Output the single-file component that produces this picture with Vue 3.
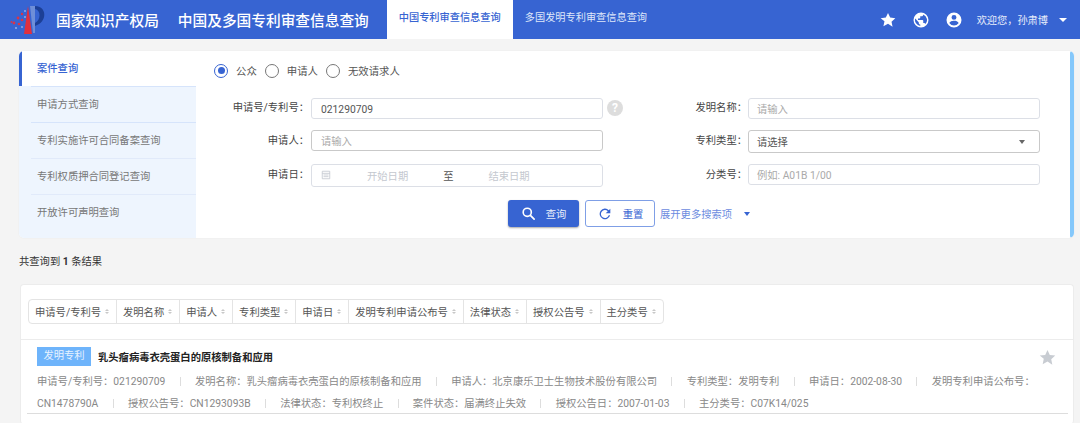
<script setup>
const sideItems = ['案件查询', '申请方式查询', '专利实施许可合同备案查询', '专利权质押合同登记查询', '开放许可声明查询']
const sortItems = ['申请号/专利号', '发明名称', '申请人', '专利类型', '申请日', '发明专利申请公布号', '法律状态', '授权公告号', '主分类号']
const meta = [
  ['申请号/专利号：', '021290709'],
  ['发明名称：', '乳头瘤病毒衣壳蛋白的原核制备和应用'],
  ['申请人：', '北京康乐卫士生物技术股份有限公司'],
  ['专利类型：', '发明专利'],
  ['申请日：', '2002-08-30'],
  ['发明专利申请公布号：', 'CN1478790A'],
  ['授权公告号：', 'CN1293093B'],
  ['法律状态：', '专利权终止'],
  ['案件状态：', '届满终止失效'],
  ['授权公告日：', '2007-01-03'],
  ['主分类号：', 'C07K14/025']
]
</script>

<template>
  <div class="page">
    <header class="top">
      <svg class="logo" viewBox="0 0 40 34" width="40" height="34">
        <path d="M19 3 L23 31 L15 31 Z" fill="#e0303f" />
        <path d="M21 3 L26 3 L26 30 L24 30 Z" fill="#6f8fd8" />
        <path d="M26 3 C38 3 39 19 26 23 L26 20 C32 17 32 7 26 6 Z" fill="#1c3f96" />
        <g fill="#d8344a">
          <circle cx="13" cy="11" r="1.2" /><circle cx="9" cy="15" r="1.4" /><circle cx="13" cy="17" r="1.3" />
          <circle cx="5" cy="20" r="1.4" /><circle cx="10" cy="21" r="1.3" /><circle cx="2.500" cy="19" r="1" />
        </g>
        <g fill="#8fa8e6">
          <circle cx="16" cy="8" r="1" /><circle cx="16" cy="14" r="1" /><circle cx="7" cy="25" r="1.1" /><circle cx="13" cy="24" r="1" />
        </g>
      </svg>
      <span class="org">国家知识产权局</span>
      <span class="sys">中国及多国专利审查信息查询</span>
      <a class="tab active">中国专利审查信息查询</a>
      <a class="tab">多国发明专利审查信息查询</a>
      <div class="top-right">
        <svg viewBox="0 0 24 24" width="18" height="18"><path fill="#fff" d="M12 2.500l2.900 6.300 6.900.8-5.100 4.700 1.400 6.800L12 16.900l-6.100 3.500 1.400-6.800L2.200 9.600l6.900-.8z" /></svg>
        <svg class="ic-globe" viewBox="0 0 24 24" width="18" height="18"><path fill="#fff" d="M12 2a10 10 0 100 20 10 10 0 000-20zm-1 17.900A8 8 0 014.200 10L9 15v1c0 1.100.9 2 2 2v1.900zm6.900-2.500c-.3-.8-1-1.400-1.900-1.400h-1v-3c0-.6-.4-1-1-1H8v-2h2c.6 0 1-.4 1-1V7h2c1.100 0 2-.9 2-2v-.4a8 8 0 012.900 12.800z" /></svg>
        <svg class="ic-user" viewBox="0 0 24 24" width="18" height="18"><path fill="#fff" d="M12 2a10 10 0 100 20 10 10 0 000-20zm0 3.200a3.300 3.300 0 110 6.600 3.300 3.300 0 010-6.600zm0 14.200a7.400 7.400 0 01-6-3.200c0-2 4-3.100 6-3.100s6 1.100 6 3.100a7.400 7.400 0 01-6 3.200z" /></svg>
        <span class="welcome">欢迎您，孙肃博</span>
        <i class="caret white"></i>
      </div>
    </header>

    <section class="panel">
      <nav class="side">
        <div v-for="(s, i) in sideItems" :key="s" class="side-item" :class="{ on: i === 0 }"><span>{{ s }}</span></div>
      </nav>
      <div class="form">
        <div class="radios">
          <label class="radio"><i class="dot sel"></i>公众</label>
          <label class="radio"><i class="dot"></i>申请人</label>
          <label class="radio"><i class="dot"></i>无效请求人</label>
        </div>
        <div class="grid">
          <div class="field">
            <span class="lab">申请号/专利号：</span>
            <div class="input val">021290709</div>
            <span class="help">?</span>
          </div>
          <div class="field rt">
            <span class="lab">发明名称：</span>
            <div class="input ph">请输入</div>
          </div>
          <div class="field">
            <span class="lab">申请人：</span>
            <div class="input ph strong">请输入</div>
          </div>
          <div class="field rt">
            <span class="lab">专利类型：</span>
            <div class="input val strong tall">请选择<i class="caret grey"></i></div>
          </div>
          <div class="field">
            <span class="lab">申请日：</span>
            <div class="input date">
              <svg viewBox="0 0 12 12" width="10" height="10"><path fill="none" stroke="#c4c8d0" d="M1.500 1.500h9v9h-9zM1.500 4h9M3 6h6M3 8h6" /></svg>
              <span class="d1">开始日期</span><span class="to">至</span><span class="d2">结束日期</span>
            </div>
          </div>
          <div class="field rt">
            <span class="lab">分类号：</span>
            <div class="input ph">例如: A01B 1/00</div>
          </div>
        </div>
        <div class="actions">
          <button class="btn primary">
            <svg viewBox="0 0 24 24" width="15" height="15"><circle cx="10" cy="10" r="6.500" fill="none" stroke="#fff" stroke-width="2.600" /><path d="M15 15l6 6" stroke="#fff" stroke-width="2.800" stroke-linecap="round" /></svg>
            <span>查询</span>
          </button>
          <button class="btn ghost">
            <svg viewBox="0 0 24 24" width="16" height="16"><path fill="#3764d2" d="M17.700 6.300A8 8 0 1019.700 14h-2.100a6 6 0 11-1.400-6.200L13 11h7V4z" /></svg>
            <span>重置</span>
          </button>
          <a class="more">展开更多搜索项</a>
          <i class="caret blue"></i>
        </div>
      </div>
      <div class="edge"></div>
    </section>

    <p class="count">共查询到 <b>1</b> 条结果</p>

    <section class="results">
      <div class="sortwrap">
        <div class="sortbar">
          <div v-for="s in sortItems" :key="s" class="sort">
            {{ s }}
            <span class="arrows"><i class="up"></i><i class="down"></i></span>
          </div>
        </div>
      </div>
      <article class="item">
        <div class="title-row">
          <span class="tag">发明专利</span>
          <h3>乳头瘤病毒衣壳蛋白的原核制备和应用</h3>
          <svg class="fav" viewBox="0 0 24 24" width="19" height="19"><path fill="#c8ccd2" d="M12 2.500l2.900 6.300 6.900.8-5.100 4.700 1.400 6.800L12 16.900l-6.100 3.500 1.400-6.800L2.200 9.600l6.900-.8z" /></svg>
        </div>
        <p class="meta">
          <template v-for="(m, i) in meta" :key="m[0]">
            <span>{{ m[0] }}</span><span class="nb">{{ m[1] }}</span><i v-if="i < meta.length - 1" class="sep"></i>
          </template>
        </p>
      </article>
    </section>
  </div>
</template>

<style>
html, body { margin: 0; padding: 0; background: #f4f4f4; }
</style>

<style scoped>
.page {
  width: 1080px;
  height: 423px;
  overflow: hidden;
  background: #f4f4f4;
  font-family: Roboto, "Noto Sans CJK SC", sans-serif;
  font-size: 10.300px;
  color: #555;
}
i { display: inline-block; font-style: normal; }

.top { height: 39px; background: #3764d2; display: flex; align-items: center; color: #fff; }
.logo { margin-left: 9px; flex: none; }
.org, .sys { font-size: 14.700px; font-weight: 500; }
.org { margin-left: 7px; }
.sys { margin-left: 19px; }
.tab { height: 39px; line-height: 35px; padding: 0 12px; font-size: 10.200px; color: #dfe7fa; }
.tab.active { margin-left: 18px; background: #fff; color: #3764d2; font-weight: 500; width: 102px; }
.top-right { margin-left: auto; display: flex; align-items: center; padding-right: 13px; }
.ic-globe { margin-left: 15px; }
.ic-user { margin-left: 15px; }
.welcome { margin-left: 14px; font-size: 10.200px; color: #e6ecfb; }
.caret { width: 0; height: 0; border-left: 4px solid transparent; border-right: 4px solid transparent; border-top: 4px solid #fff; }
.caret.white { margin-left: 11px; }
.caret.grey { border-top-color: #666; border-left-width: 3.500px; border-right-width: 3.500px; margin-left: auto; }
.caret.blue { border-top-color: #3764d2; border-left-width: 3.500px; border-right-width: 3.500px; margin-left: 12px; }

.panel {
  margin: 12px 6px 0 19px;
  height: 187px;
  display: flex;
  background: #fff;
  border-radius: 5px;
  overflow: hidden;
  box-shadow: 0 0 2px rgba(0, 0, 0, .06);
}
.side { width: 177px; flex: none; background: #eef5fe; display: flex; flex-direction: column; }
.side-item { height: 36px; flex: none; display: flex; align-items: center; color: #777; position: relative; box-sizing: border-box; padding-left: 18px; padding-bottom: 2px; }
.side-item + .side-item::before { content: ""; position: absolute; top: 0; left: 12px; right: 0; height: 1px; background: #e1eafa; }
.side-item:nth-child(2)::before, .side-item:nth-child(3)::before { background: #d6e4fb; }
.side-item.on { height: 35px; background: #fff; color: #3764d2; font-weight: 500; border-left: 3px solid #3764d2; padding-left: 15px; }

.form { flex: 1; position: relative; padding-left: 18px; }
.radios { display: flex; align-items: center; height: 15px; margin-top: 12px; color: #555; }
.radio { display: flex; align-items: center; margin-right: 8px; font-size: 10.400px; }
.dot { width: 12px; height: 12px; border: 1.300px solid #777; border-radius: 50%; margin-right: 8px; box-sizing: content-box; }
.dot.sel { border-color: #3764d2; position: relative; }
.dot.sel::after { content: ""; position: absolute; inset: 2.500px; border-radius: 50%; background: #3764d2; }

.grid { display: grid; grid-template-columns: 443px 355px; grid-template-rows: 21px 23px 23px; row-gap: 11px; margin: 20px 0 0 1px; }
.field { display: flex; align-items: flex-start; }
.lab { width: 94px; margin-right: 2px; flex: none; align-self: center; text-align: right; line-height: 1.2; color: #444; white-space: nowrap; }
.rt { margin-left: -8px; }
.rt .lab { width: 57px; margin-left: 40px; }
.input {
  box-sizing: border-box;
  flex: none;
  height: 21px;
  line-height: 19px;
  width: 292px;
  border: 1px solid #dcdfe6;
  border-radius: 3px;
  padding: 1px 9px 0;
  background: #fff;
  display: flex;
  align-items: center;
}
.rt .input { margin-left: -1px; padding: 1px 8px 0; }
.ph { color: #aaa; }
.val { color: #555; }
.strong { border-color: #c9c9c9; }
.rt .tall { height: 23px; padding-top: 2px; }
.tall .caret { margin-right: 6px; margin-top: -2px; }
.date { height: 23px; color: #c4c8cf; padding: 2px 9px 0; }
.date svg { margin-top: -3px; }
.d1 { margin-left: 36px; }
.to { margin-left: 35px; margin-top: -1px; color: #555; }
.d2 { margin-left: 35px; }
.help { width: 16px; height: 16px; margin: 2px 0 0 4px; border-radius: 50%; background: #ddd; color: #fff; font-weight: 700; font-size: 12px; line-height: 16px; text-align: center; }

.actions { position: absolute; left: 312px; top: 149px; display: flex; align-items: center; }
.btn { height: 27px; box-sizing: border-box; border-radius: 3px; font: inherit; display: flex; align-items: center; justify-content: center; gap: 10px; padding: 0; cursor: pointer; }
.primary { width: 71px; background: #3764d2; border: 0; color: #e8eefb; box-shadow: 0 1px 2px rgba(0, 0, 0, .35); }
.ghost { width: 70px; margin-left: 6px; background: #fff; border: 1px solid #7f9fe6; color: #3764d2; }
.more { margin-left: 5px; color: #6c8ce0; }

.edge { width: 4px; flex: none; background: #85c8fb; border-radius: 3px; }

.count { margin: 17px 0 0 19px; height: 14px; line-height: 14px; color: #333; }
.count b { font-weight: 700; }

.results { margin: 15px 6px 0 20px; background: #fff; border-radius: 4px; border: 1px solid #ececec; border-bottom: 0; height: 140px; box-sizing: border-box; }
.sortwrap { height: 55px; box-sizing: border-box; padding: 14px 0 0 7px; border-bottom: 1px solid #ececec; }
.sortbar { display: inline-flex; height: 25px; box-sizing: border-box; border: 1px solid #e4e4e4; border-radius: 4px; }
.sort { display: flex; align-items: center; padding: 0 7px 0 6px; color: #555; white-space: nowrap; border-left: 1px solid #e4e4e4; }
.sort:first-child { border-left: 0; }
.arrows { display: inline-flex; flex-direction: column; gap: 1px; margin-left: 4px; }
.arrows i { width: 0; height: 0; border-left: 2px solid transparent; border-right: 2px solid transparent; }
.up { border-bottom: 2.500px solid #c8c8c8; }
.down { border-top: 2.500px solid #c8c8c8; }

.item { margin: 0 5px 0 6px; padding: 6px 0 0 10px; height: 74px; box-sizing: border-box; border-bottom: 1px solid #ddd; }
.title-row { display: flex; align-items: center; height: 20px; position: relative; }
.tag { width: 54px; height: 19px; line-height: 18px; background: #6eb4fb; color: #e6f2ff; text-align: center; font-size: 10.300px; }
h3 { margin: 0 0 0 7px; font-size: 10.300px; font-weight: 700; color: #222; }
.fav { position: absolute; right: 11px; top: 2px; }
.meta { margin: 5px 0 0; width: 1006px; line-height: 22px; color: #888; }
.nb { white-space: nowrap; }
.sep { width: 1px; height: 9px; background: #ddd; margin: 0 14.300px; vertical-align: -1px; }
</style>
